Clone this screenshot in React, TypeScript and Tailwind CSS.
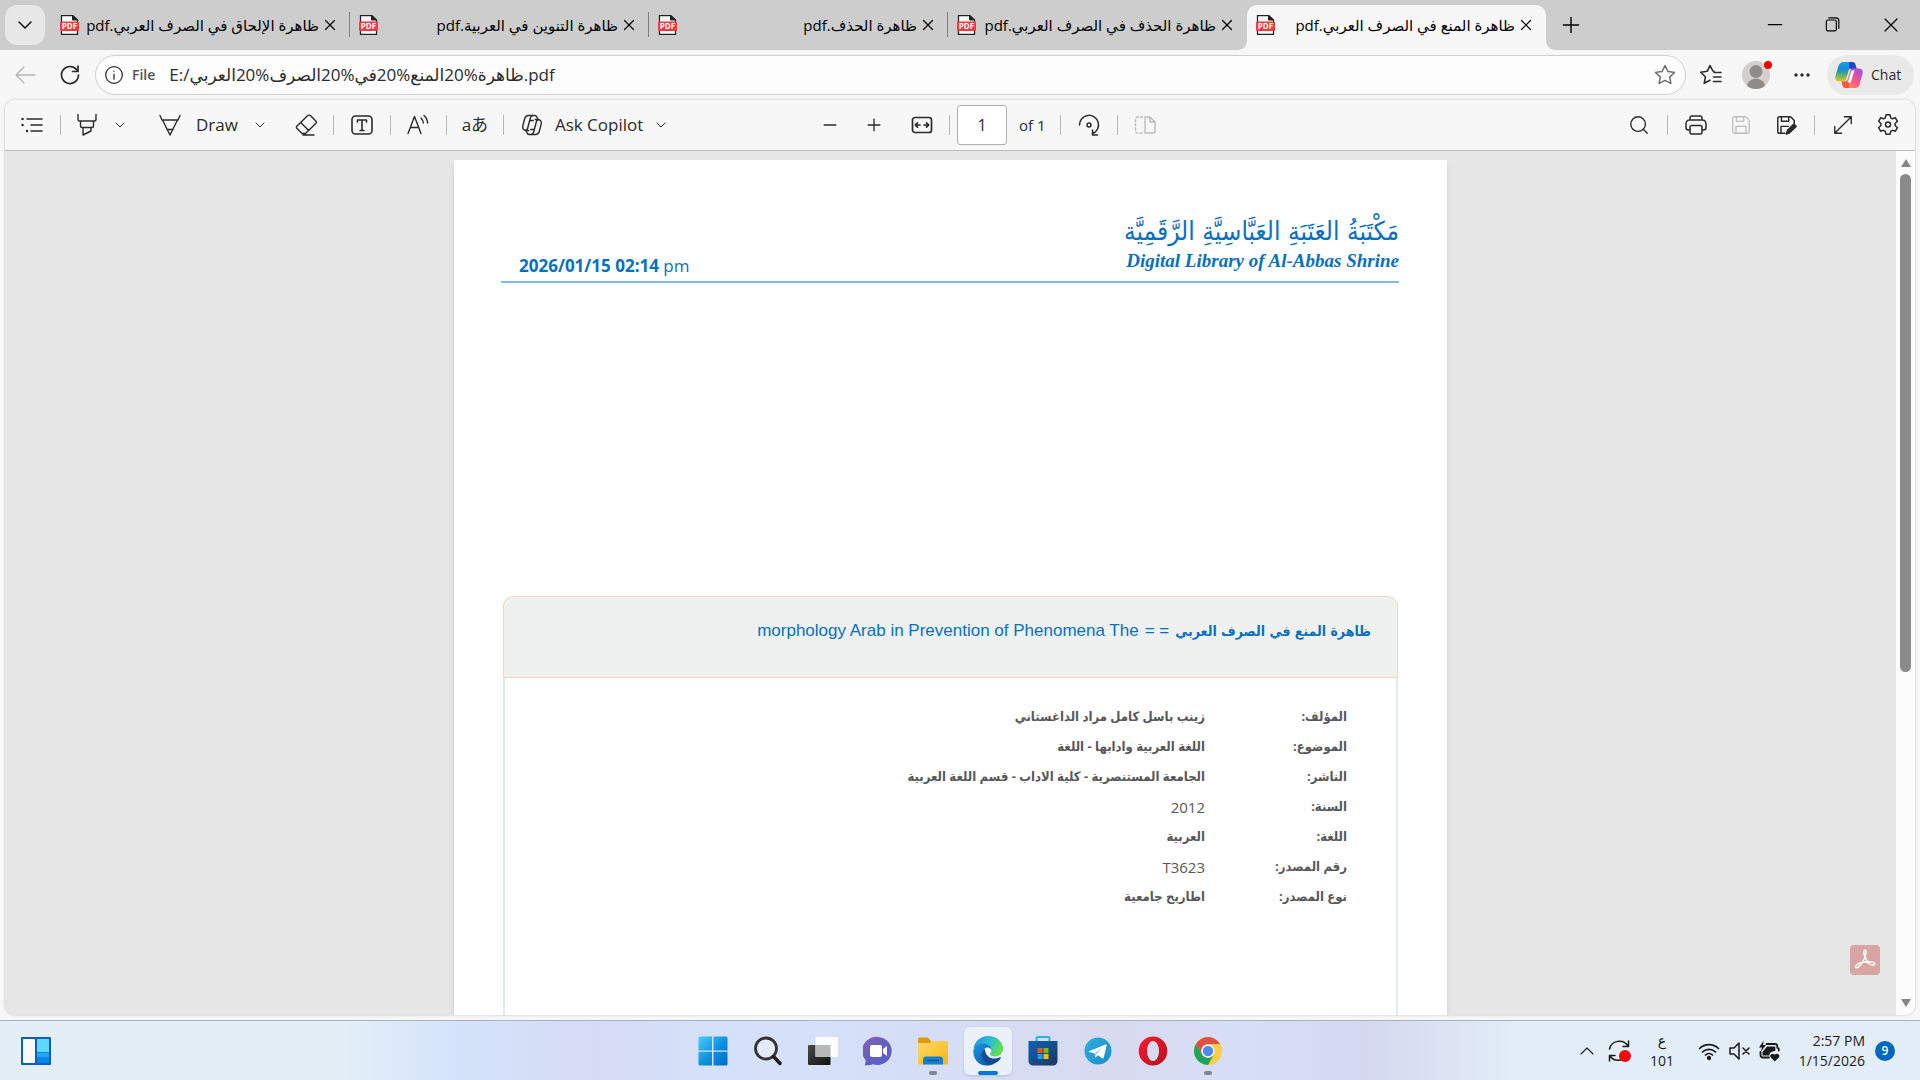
import React from "react";
import { ChevronDown, ChevronUp, Minus, Plus, Search, X } from "lucide-react";

const tabs = [
  { title: "ظاهرة الإلحاق في الصرف العربي.pdf", active: false, divider: true },
  { title: "ظاهرة التنوين في العربية.pdf", active: false, divider: true },
  { title: "ظاهرة الحذف.pdf", active: false, divider: true },
  { title: "ظاهرة الحذف في الصرف العربي.pdf", active: false, divider: false },
  { title: "ظاهرة المنع في الصرف العربي.pdf", active: true, divider: false },
];

const details = [
  { label: "المؤلف:", value: "زينب باسل كامل مراد الداغستاني" },
  { label: "الموضوع:", value: "اللغة العربية وادابها - اللغة" },
  { label: "الناشر:", value: "الجامعة المستنصرية - كلية الاداب - قسم اللغة العربية" },
  { label: "السنة:", value: "2012", latin: true },
  { label: "اللغة:", value: "العربية" },
  { label: "رقم المصدر:", value: "T3623", latin: true },
  { label: "نوع المصدر:", value: "اطاريح جامعية" },
];

interface IconProps {
  children: React.ReactNode;
  size?: string;
  width?: number;
}

const Icon = ({ children, size = "size-6", width = 1.4 }: IconProps) => (
  <svg
    viewBox="0 0 24 24"
    className={`${size} shrink-0`}
    fill="none"
    stroke="currentColor"
    strokeWidth={width}
    strokeLinecap="round"
    strokeLinejoin="round"
    aria-hidden="true"
  >
    {children}
  </svg>
);

interface ToolProps {
  label: string;
  className?: string;
  children: React.ReactNode;
}

const Tool = ({ label, className = "w-[54px]", children }: ToolProps) => (
  <button type="button" aria-label={label} className={`flex h-10 shrink-0 items-center justify-center ${className}`}>
    {children}
  </button>
);

const Divider = () => <span className="mx-px h-5 w-px shrink-0 bg-[#b8b8b8]" />;

const PdfIcon = () => (
  <svg viewBox="0 0 19 20" className="h-5 w-[19px] shrink-0" aria-hidden="true">
    <path d="M1.500.7h11.500L17.500 5v14.300h-16z" fill="#fff" stroke="#222" strokeWidth="1.3" />
    <path d="M12.500.7V5h5z" fill="#222" stroke="#222" />
    <rect y="6.500" width="19" height="9.500" rx="1" fill="#f8393f" />
    <text x="9.5" y="14" textAnchor="middle" fontSize="8" fontWeight="700" fill="#fff" fontFamily="Open Sans, sans-serif">
      PDF
    </text>
  </svg>
);

const CopilotOutline = () => (
  <Icon>
    <path d="M8.7 17.5H6.2c-2.7 0-4-2-3.4-4.6L4.6 6C5.200 3.700 6.200 2.500 8.500 2.500h6.300c1.400 0 2.100.9 2.500 2.200l.7 2" />
    <path d="M15.300 6.500h2.500c2.700 0 4 2 3.400 4.600L19.400 18c-.6 2.300-1.600 3.500-3.900 3.500H9.200c-1.400 0-2.100-.9-2.500-2.200l-.5-1.700" />
    <path d="M12.300 2.600c-1.200.5-1.700 1.400-2.100 2.900L7.700 15c-.4 1.600-.9 2.500-2.400 2.500" />
    <path d="M11.700 21.400c1.200-.5 1.700-1.400 2.100-2.900L16.300 9c.4-1.600.9-2.500 2.400-2.500" />
    <path d="M9.800 7.500h3.400M10.800 16.500h3.400" />
  </Icon>
);

const CopilotLogo = () => (
  <svg viewBox="0 0 28 28" className="size-7 shrink-0" aria-hidden="true">
    <defs>
      <linearGradient id="copilotA" x1="0" y1="0" x2="0" y2="1">
        <stop stopColor="#14a4e8" />
        <stop offset=".35" stopColor="#1787dd" />
        <stop offset=".65" stopColor="#4cb174" />
        <stop offset="1" stopColor="#f2c80e" />
      </linearGradient>
      <linearGradient id="copilotB" x1="1" y1="0" x2="0" y2="1">
        <stop stopColor="#9a4bee" />
        <stop offset=".5" stopColor="#f65888" />
        <stop offset="1" stopColor="#ffa34d" />
      </linearGradient>
    </defs>
    <path d="M9 1h8c2 0 3 1 3.500 3l.8 3H17c-2 0-3 1-3.500 3l-2 7c-.6 2-1.500 3.500-4 3.500H4.500C1 20.500-.3 18 .5 15L3.300 5.500C4.200 2.500 6 1 9 1z" fill="url(#copilotA)" />
    <path d="M14 1h3c2 0 3 1 3.500 3l1.500 4.500h-5c-1.500 0-2.500-1-3-3z" fill="#1947c8" />
    <path d="M19 27h-8c-2 0-3-1-3.500-3L6.600 20.500H9c2.500 0 3.400-1.500 4-3.500l2-7c.6-2 1.500-2.500 3-2.500h5.500c3.500 0 4.800 2.500 4 5.500l-2.800 9.500C24.800 25.500 22 27 19 27z" fill="url(#copilotB)" />
    <path d="M14 27h-3c-2 0-3-1-3.500-3l-1-3.500H11c1.800 0 2.500 1 3 2.500z" fill="#f0583f" />
    <path d="M16.500 9.500h3l-3.800 12h-3z" fill="#fff" />
  </svg>
);

const TabStrip = () => (
  <div className="flex h-[50px] items-end bg-[#cdcdcd] pl-[5px] text-black">
    <button type="button" aria-label="Tab actions" className="mb-[5px] mr-1.5 flex size-10 shrink-0 items-center justify-center rounded-xl bg-[#e7e7e7]">
      <ChevronDown className="size-6" strokeWidth={1.4} />
    </button>
    <div role="tablist" className="flex min-w-0">
      {tabs.map((tab) => (
        <div
          key={tab.title}
          role="tab"
          aria-selected={tab.active}
          className={`relative flex h-[45px] w-[299px] min-w-0 items-center pb-[5px] pl-[9px] pr-[11px] ${
            tab.active ? "rounded-t-[10px] bg-[#f7f7f7]" : ""
          }`}
        >
          {tab.active && (
            <>
              <svg viewBox="0 0 10 10" className="absolute -left-2.5 bottom-0 size-2.5" aria-hidden="true">
                <path d="M10 0v10H0C6 10 10 6 10 0z" fill="#f7f7f7" />
              </svg>
              <svg viewBox="0 0 10 10" className="absolute -right-2.5 bottom-0 size-2.5" aria-hidden="true">
                <path d="M0 0v10h10C4 10 0 6 0 0z" fill="#f7f7f7" />
              </svg>
            </>
          )}
          <PdfIcon />
          <span dir="rtl" className="min-w-0 flex-1 truncate text-[15px] leading-7">
            {tab.title}
          </span>
          <button type="button" aria-label="Close tab" className="ml-0.5">
            <X className="size-[18px]" strokeWidth={1.6} />
          </button>
          {tab.divider && <span className="absolute right-0 top-[7px] h-[25px] w-px bg-[#808080]" />}
        </div>
      ))}
    </div>
    <button type="button" aria-label="New tab" className="mb-[5px] flex h-10 w-[50px] items-center justify-center">
      <Plus className="size-[26px]" strokeWidth={1.3} />
    </button>
    <div className="mb-[5px] ml-auto flex">
      <Tool label="Minimize" className="w-[58px]">
        <Icon size="size-5"><path d="M4 11.500h16" /></Icon>
      </Tool>
      <Tool label="Restore" className="w-[58px]">
        <Icon size="size-5">
          <rect x="4" y="6" width="12" height="13" rx="2" />
          <path d="M7 3.500h8.500A3.500 3.500 0 0 1 19 7v9" />
        </Icon>
      </Tool>
      <Tool label="Close" className="w-[58px]">
        <X className="size-6" strokeWidth={1.2} />
      </Tool>
    </div>
  </div>
);

const AddressBar = () => (
  <div className="flex h-[50px] items-center bg-[#f7f7f7] pr-1.5 text-[#2b2b2b]">
    <Tool label="Back" className="w-[50px] text-[#b5b5b5]">
      <Icon><path d="M22 12H3M11 4l-8 8 8 8" /></Icon>
    </Tool>
    <Tool label="Refresh" className="w-10">
      <Icon width={1.7}>
        <path d="M19.500 8A8.500 8.500 0 1 0 20.500 12" />
        <path d="M20 3v5.500h-5.500" />
      </Icon>
    </Tool>
    <div className="ml-[5px] flex h-10 min-w-0 flex-1 items-center rounded-full border border-[#cfcfcf] bg-[#fdfdfd] px-2">
      <Icon size="size-5" width={1.5}>
        <circle cx="12" cy="12" r="10" />
        <path d="M12 11v6M12 7.300v.2" />
      </Icon>
      <label htmlFor="address" className="ml-2 text-sm font-semibold text-[#555]">File</label>
      <input
        id="address"
        dir="ltr"
        defaultValue="E:/ظاهرة%20المنع%20في%20الصرف%20العربي.pdf"
        className="ml-3.5 min-w-0 flex-1 bg-transparent text-[17px] outline-none"
      />
      <button type="button" aria-label="Add to favorites" className="text-[#666]">
        <Icon>
          <path d="m12 2.500 2.900 6 6.600.9-4.800 4.600 1.200 6.500-5.900-3.100-5.900 3.100L7.300 14 2.500 9.400l6.600-.9z" />
        </Icon>
      </button>
    </div>
    <Tool label="Favorites" className="w-[50px]">
      <Icon width={1.6}>
        <path d="M15 8.300 13.900 8 11 2.500 8.200 8.300l-6.500.9 4.700 4.600-1.200 6.500L11 17.200M15 9.500h7M14.500 14H22M14.500 18.500H22" />
      </Icon>
    </Tool>
    <Tool label="Profile" className="w-10">
      <svg viewBox="0 0 32 32" className="size-8" aria-hidden="true">
        <defs>
          <clipPath id="avatarClip"><circle cx="16" cy="16" r="14" /></clipPath>
        </defs>
        <circle cx="16" cy="16" r="14" fill="#d2d0ce" />
        <g clipPath="url(#avatarClip)" fill="#8f8b88">
          <circle cx="16" cy="12.500" r="6.500" />
          <circle cx="16" cy="29" r="9.500" />
        </g>
        <circle cx="28" cy="6" r="4" fill="#e8060b" />
      </svg>
    </Tool>
    <Tool label="Settings and more" className="w-[51px]">
      <svg viewBox="0 0 16 4" className="h-1 w-4" fill="currentColor" aria-hidden="true">
        <circle cx="2" cy="2" r="1.700" />
        <circle cx="8" cy="2" r="1.700" />
        <circle cx="14" cy="2" r="1.700" />
      </svg>
    </Tool>
    <button type="button" className="flex h-10 w-[87px] shrink-0 items-center gap-2 rounded-full bg-[#e9e9e9] pl-2 text-sm">
      <CopilotLogo />
      Chat
    </button>
  </div>
);

const Toolbar = () => (
  <div className="flex h-[51px] items-center border-b border-[#bdbdbd] bg-[#f7f7f7] text-[#2b2b2b]">
    <div className="flex flex-1 items-center">
      <Tool label="Contents">
        <Icon width={1.5}>
          <path d="M7 6h15M11 12h11M11 18h11" />
          <path d="M2.500 6h.1M2.500 12h.1M7 18h.1" strokeWidth="2.400" />
        </Icon>
      </Tool>
      <Divider />
      <Tool label="Highlight" className="w-[50px]">
        <Icon>
          <path d="M3 1.500v4.700c0 1 .6 1.800 1.500 1.800h15c.9 0 1.500-.8 1.500-1.800V1.500M5.500 8v5c0 1 .8 1.500 1.500 1.500h10c.8 0 1.500-.6 1.500-1.500V8M8 14.500V22l8-4v-3.500" />
        </Icon>
      </Tool>
      <Tool label="Highlight options" className="w-4"><ChevronDown className="size-4" strokeWidth={1.5} /></Tool>
      <button type="button" className="ml-[22px] flex h-10 items-center text-[17px]">
        <span className="flex w-10 justify-center">
          <Icon>
            <path d="M2 2.500l2 4.500h16l2-4.500M4.500 7l7.500 15L19.500 7M9 16.500h6" />
          </Icon>
        </span>
        <span className="ml-1.5">Draw</span>
      </button>
      <Tool label="Draw options" className="ml-2.5 w-6"><ChevronDown className="size-4" strokeWidth={1.5} /></Tool>
      <Tool label="Erase" className="ml-2 w-[52px]">
        <Icon>
          <path d="M13.500 2.800 2.800 13.200a1.500 1.500 0 0 0 0 2L8 20.500h3.500L22 10.200a1.500 1.500 0 0 0 0-2l-5.300-5.400a2.200 2.200 0 0 0-3.200 0zM6.700 9.500l8 8M9 22h11" />
        </Icon>
      </Tool>
      <Divider />
      <Tool label="Add text">
        <Icon width={1.6}>
          <rect x="2" y="3" width="20" height="18" rx="3.500" />
          <path d="M7.500 9V7h9v2M12 7v10.500M10 17.500h4" />
        </Icon>
      </Tool>
      <Divider />
      <Tool label="Read aloud" className="w-[53px]">
        <Icon>
          <path d="m2 20.500 6.500-17 6.500 17M4.300 14.500h8.400M15 5c1.500 1.500 2.200 3 2.300 5M18 2.500c2.300 2 3.500 4.500 3.600 7.500" />
        </Icon>
      </Tool>
      <Divider />
      <Tool label="Translate" className="w-[54px] text-[17px]">aあ</Tool>
      <Divider />
      <button type="button" className="ml-2 flex h-10 items-center text-[17px]">
        <span className="flex w-[38px] justify-center"><CopilotOutline /></span>
        <span className="ml-1">Ask Copilot</span>
        <ChevronDown className="ml-2.5 size-4" strokeWidth={1.5} />
      </button>
    </div>
    <div className="flex items-center pl-[68px]">
      <Tool label="Zoom out" className="w-11"><Minus className="size-5" strokeWidth={1.6} /></Tool>
      <Tool label="Zoom in" className="w-11"><Plus className="size-5" strokeWidth={1.6} /></Tool>
      <Tool label="Fit to width" className="w-[52px]">
        <Icon width={1.7}>
          <rect x="2.500" y="4.500" width="19" height="15" rx="2.500" />
          <path d="M10 12H5.500M7.500 9.800 5.300 12l2.200 2.200M14 12h4.500M16.500 9.800l2.200 2.200-2.200 2.200" />
        </Icon>
      </Tool>
      <Divider />
      <input
        aria-label="Page"
        defaultValue="1"
        className="ml-1.5 h-10 w-[50px] rounded-[3px] border border-[#b0b0b0] bg-white text-center text-base outline-none"
      />
      <span className="mx-3 w-7 whitespace-nowrap text-[15px]">of 1</span>
      <Divider />
      <Tool label="Rotate">
        <Icon width={1.5}>
          <path d="M2.500 12A9.500 9.500 0 1 1 16 20.500M15.500 17v5h5" />
          <circle cx="12" cy="12" r="2" />
        </Icon>
      </Tool>
      <Divider />
      <Tool label="Page view" className="w-[52px] text-[#bcbcbc]">
        <Icon>
          <path d="M9.500 4H4.500a2 2 0 0 0-2 2v12a2 2 0 0 0 2 2h5" strokeDasharray="2 2.200" />
          <path d="M12 4h5l5 5v9a2 2 0 0 1-2 2h-8zM17 4v5h5" />
        </Icon>
      </Tool>
    </div>
    <div className="flex flex-1 items-center justify-end pr-[9px]">
      <Tool label="Find"><Search className="size-[22px]" strokeWidth={1.5} /></Tool>
      <Divider />
      <Tool label="Print">
        <Icon width={1.5}>
          <path d="M6 7V5a2 2 0 0 1 2-2h8a2 2 0 0 1 2 2v2M6 17H4.500A2.500 2.500 0 0 1 2 14.500v-4A3.500 3.500 0 0 1 5.500 7h13a3.500 3.500 0 0 1 3.500 3.500v4a2.500 2.500 0 0 1-2.500 2.500H18" />
          <rect x="6" y="12.500" width="12" height="8.500" rx="1.500" />
        </Icon>
      </Tool>
      <Tool label="Save" className="w-9 text-[#bcbcbc]">
        <Icon size="size-[22px]">
          <path d="M3 5a2 2 0 0 1 2-2h12l4 4v12a2 2 0 0 1-2 2H5a2 2 0 0 1-2-2zM7 3v5h8V3M6.500 21v-7.500h11V21" />
        </Icon>
      </Tool>
      <Tool label="Save as">
        <Icon size="size-[22px]" width={1.6}>
          <path d="M11 21H5a2 2 0 0 1-2-2V5a2 2 0 0 1 2-2h12l4 4v3M7 3v5h8V3M6.500 21v-7.500h8" />
          <path d="m12.500 22 1-4 7-7 2.500 2.500-7 7z" fill="currentColor" />
        </Icon>
      </Tool>
      <Divider />
      <Tool label="Full screen">
        <Icon size="size-[22px]" width={1.5}><path d="M3.500 20.500 20.500 3.500M13.500 3h7.500v7.500M3 13.500V21h7.500" /></Icon>
      </Tool>
      <Tool label="Settings" className="w-9">
        <Icon width={1.5}>
          <path d="M10 1.800h4l.7 3 1.700 1 3-1 2 3.500-2.300 2.200v2l2.300 2.200-2 3.500-3-.9-1.700 1-.7 3h-4l-.7-3-1.700-1-3 .9-2-3.500L4.900 12.500v-2L2.600 8.300l2-3.500 3 1 1.700-1z" />
          <circle cx="12" cy="11.500" r="2.500" />
        </Icon>
      </Tool>
    </div>
  </div>
);

const Document = () => (
  <article className="h-full w-[993px] shrink-0 bg-[#fefefe] shadow-md">
    <header className="ml-[47px] mr-12 flex h-[123px] items-end justify-between border-b-2 border-[#84bbe1] pl-[18px] text-[#0a70bd]">
      <time className="text-[17px] leading-[30px]">
        <b>2026/01/15 02:14</b> pm
      </time>
      <div className="flex flex-col items-end pb-3">
        <span dir="rtl" className="whitespace-nowrap font-['DejaVu_Sans_Condensed','DejaVu_Sans'] text-[26px] leading-[44px]">
          مَكْتَبَةُ العَتَبَةِ العَبَّاسِيَّةِ الرَّقَمِيَّة
        </span>
        <span className="whitespace-nowrap font-['Liberation_Serif',serif] text-[19px] font-bold italic leading-4">
          Digital Library of Al-Abbas Shrine
        </span>
      </div>
    </header>
    <div dir="rtl" className="mx-[49px] mt-[313px] h-full">
      <h1 className="flex h-[82px] items-start gap-1.5 rounded-t-[10px] border border-[#f0d6bd] bg-[#eff1f1] px-[26px] pt-5 text-[17px] leading-7 text-[#0a70bd]">
        <span className="whitespace-nowrap font-['DejaVu_Sans_Condensed','DejaVu_Sans'] text-sm font-bold leading-7">
          ظاهرة المنع في الصرف العربي
        </span>
        <span className="font-['Liberation_Sans']">= =</span>
        <span dir="ltr" className="whitespace-nowrap font-['Liberation_Sans']">
          morphology Arab in Prevention of Phenomena The
        </span>
      </h1>
      <dl className="h-full border-x-2 border-[#dfebf3] px-[49px] pt-6 font-['Open_Sans','DejaVu_Sans_Condensed','DejaVu_Sans'] text-[13px] text-[#58585a]">
        {details.map((row) => (
          <div key={row.label} className="flex h-[30px] items-center">
            <dt className="w-[142px] shrink-0 font-bold">{row.label}</dt>
            <dd className={`whitespace-nowrap ${row.latin ? "text-[15px] font-medium" : "font-bold"}`}>{row.value}</dd>
          </div>
        ))}
      </dl>
    </div>
  </article>
);

const Viewer = () => (
  <main className="relative flex min-h-0 flex-1 bg-[#e6e6e6]">
    <div className="flex min-w-0 flex-1 justify-center overflow-hidden pt-[9px]">
      <Document />
    </div>
    <div className="flex w-[19px] shrink-0 flex-col items-center bg-[#fcfcfc] py-2 text-[#858585]">
      <svg viewBox="0 0 10 8" className="h-2 w-2.5" fill="currentColor" aria-hidden="true"><path d="M5 0l5 8H0z" /></svg>
      <div className="mt-[7px] h-[498px] w-[11px] rounded-full bg-[#8a8a8a]" />
      <svg viewBox="0 0 10 8" className="mt-auto h-2 w-2.5" fill="currentColor" aria-hidden="true"><path d="M0 0h10L5 8z" /></svg>
    </div>
    <button type="button" aria-label="Open in Acrobat" className="absolute bottom-10 right-[35px] flex size-[30px] items-center justify-center rounded-[4px] bg-[#d9a5a3] text-white">
      <Icon width={1.4}>
        <path d="M12 8.500c-1.500-3-1.500-6.500 0-6.500s1.500 3.500 0 6.500c-1.500 4.500-4.500 9.500-7.500 11-2 .8-3-.8-1.300-2.300C5.500 15.200 10 14 14 13.800c4-.2 8 .5 8 2s-3 1.700-5.500.2C14.500 14.600 13 11.500 12 8.500z" />
      </Icon>
    </button>
  </main>
);

interface AppButtonProps {
  label: string;
  active?: boolean;
  running?: boolean;
  children: React.ReactNode;
}

const AppButton = ({ label, active, running, children }: AppButtonProps) => (
  <button
    type="button"
    aria-label={label}
    className={`relative flex size-12 items-center justify-center rounded-md ${active ? "bg-[#ecf0fa] shadow-sm" : ""}`}
  >
    <svg viewBox="0 0 30 30" className="size-[30px]" aria-hidden="true">{children}</svg>
    {active && <span className="absolute bottom-0 h-1 w-5 rounded-full bg-[#0078d4]" />}
    {running && <span className="absolute bottom-0 h-1 w-2 rounded-full bg-[#808693]" />}
  </button>
);

const Gradient = ({ id, from, to, mid }: { id: string; from: string; to: string; mid?: string }) => (
  <linearGradient id={id} x1="0" y1="0" x2="1" y2="1">
    <stop stopColor={from} />
    {mid && <stop offset=".5" stopColor={mid} />}
    <stop offset="1" stopColor={to} />
  </linearGradient>
);

const TaskbarApps = () => (
  <nav aria-label="Apps" className="flex gap-[7px]">
    <AppButton label="Start">
      <Gradient id="win" from="#46d0fb" to="#0069cc" mid="#1194e0" />
      <path d="M2 .500h12v14H.500V2A1.500 1.500 0 0 1 2 .500zM15.500.500H28A1.500 1.500 0 0 1 29.500 2v12.500h-14zM.500 15.700h13.500v13.800H2A1.500 1.500 0 0 1 .500 28zM15.500 15.700h14V28a1.500 1.500 0 0 1-1.500 1.500H15.500z" fill="url(#win)" />
    </AppButton>
    <AppButton label="Search">
      <circle cx="13" cy="12.500" r="10.500" fill="#e8eefb" fillOpacity=".7" stroke="#333" strokeWidth="2.800" />
      <path d="m20.500 20.500 6.500 7" stroke="#1d1d1d" strokeWidth="3.400" strokeLinecap="round" />
    </AppButton>
    <AppButton label="Task view">
      <Gradient id="view" from="#494949" to="#111" />
      <rect x="0" y="9" width="22.500" height="20" rx="1" fill="url(#view)" />
      <rect x="7.500" y="1" width="22.500" height="20" rx="1" fill="#fff" fillOpacity=".95" />
      <path d="M7.500 9h15v12h-14a1 1 0 0 1-1-1z" fill="#b9b9b9" />
    </AppButton>
    <AppButton label="Chat">
      <Gradient id="teams" from="#8b61b8" to="#5a5fd0" mid="#6360bd" />
      <path d="M15 1a14 14 0 1 1-5 27.200c-2.500.9-5.500 1.500-8.500.8 1-1.700 1.400-3 1-5A14 14 0 0 1 15 1z" fill="url(#teams)" />
      <rect x="7" y="9" width="12" height="12" rx="2" fill="#fff" />
      <path d="m20 13 4-3v10l-4-3z" fill="#fff" />
    </AppButton>
    <AppButton label="File Explorer" running>
      <Gradient id="folder" from="#ffdb6b" to="#f7b50e" />
      <path d="M0 3.500C0 2 .8 1.500 2 1.500h8l3 3.500v6H0z" fill="#dd9b08" />
      <path d="M0 7h12l2-2h15c.6 0 1 .4 1 1v21c0 .8-.5 1.500-1.500 1.500h-27C.5 28.500 0 28 0 27z" fill="url(#folder)" />
      <path d="M5 28.500v-5a3 3 0 0 1 3-3h14a3 3 0 0 1 3 3v5z" fill="#1580cf" />
      <path d="M9 24.500h12" stroke="#0a4c88" strokeWidth="1.200" />
    </AppButton>
    <AppButton label="Microsoft Edge" active>
      <linearGradient id="edgeTop" x1="0" y1=".2" x2="1" y2=".6">
        <stop stopColor="#2293dc" />
        <stop offset=".55" stopColor="#2bc3d2" />
        <stop offset="1" stopColor="#6be23c" />
      </linearGradient>
      <Gradient id="edgeLeft" from="#1a9be0" to="#0a4da3" />
      <path d="M.500 13A15 14.500 0 0 1 15 0c9 0 15 6 15 12.500 0 5-3.500 8-8 8-3 0-5-1.300-5-2.500 0-.8 1.400-1.300 1.400-3.500 0-3-3-5-6.400-5C7 9.500 2.500 11 .500 13z" fill="url(#edgeTop)" />
      <path d="M.300 15C1.500 10 6 7.500 10.500 7.500c4.500 0 8 3 8 6.500 0 0-1-2.500-4-2.500-4 0-5.500 5-3.500 9.500 1.600 3.800 5 6.500 9.500 7C9 33 0 25 .300 15z" fill="url(#edgeLeft)" />
      <path d="M11.800 13c-3.500 2.500-4 7.500-1.800 11 2.500 4 6.800 5 10.500 4 3.500-1.300 6-3.500 7.300-6 .3-.7-.3-1-1-.7-4 2-9 1.700-12-1.300-2-2-2.800-4.500-3-7z" fill="#114c95" />
    </AppButton>
    <AppButton label="Microsoft Store">
      <Gradient id="store" from="#0a63b8" to="#20365d" />
      <path d="M8.500 6V2.500C8.500 1.500 9 1 10 1h10c1 0 1.500.5 1.500 1.500V6" fill="none" stroke="#1fb5ee" strokeWidth="2" />
      <path d="M.500 5h29v20a4.500 4.500 0 0 1-4.500 4.500H5A4.500 4.500 0 0 1 .500 25z" fill="url(#store)" />
      <path d="M9.500 12h5v5h-5z" fill="#f25022" />
      <path d="M15.500 12h5v5h-5z" fill="#7fba00" />
      <path d="M9.500 18h5v5h-5z" fill="#00a4ef" />
      <path d="M15.500 18h5v5h-5z" fill="#ffb900" />
    </AppButton>
    <AppButton label="Telegram">
      <Gradient id="telegram" from="#2eaee0" to="#1a8dc7" />
      <circle cx="15" cy="15" r="13.500" fill="url(#telegram)" />
      <path d="M6 15.200 22.500 8.500c.8-.2 1.200.3 1 1.200l-2.800 12c-.2.900-.8 1-1.500.6l-4.200-3-2.200 2c-.4.300-.8.200-.8-.3l-.3-3.500-5.300-1.500c-.7-.2-.7-.6-.4-.8z" fill="#fff" />
      <path d="m11.700 17.500 8-6.500-6.500 7.500-.9 2.800z" fill="#9cc9e0" />
    </AppButton>
    <AppButton label="Opera">
      <Gradient id="opera" from="#ff1b2d" to="#b3101c" />
      <path fillRule="evenodd" d="M15 .500a14.300 14.500 0 1 0 0 29 14.300 14.500 0 1 0 0-29zm0 4.500c3.500 0 6 4.500 6 10s-2.500 10-6 10-6-4.500-6-10 2.500-10 6-10z" fill="url(#opera)" />
    </AppButton>
    <AppButton label="Google Chrome" running>
      <circle cx="15" cy="15" r="14" fill="#fecd45" />
      <path d="M2.900 8A14 14 0 0 1 27.100 8H15a7 7 0 0 0-6 10.500z" fill="#dd5044" />
      <path d="M2.900 8a14 14 0 0 0 12.100 21l6-10.500a7 7 0 0 1-12 0z" fill="#1da261" />
      <circle cx="15" cy="15" r="6.500" fill="#fff" />
      <circle cx="15" cy="15" r="5.200" fill="#4c8bf5" />
    </AppButton>
  </nav>
);

const Tray = () => (
  <div className="mr-[5px] flex items-center text-[#1b1b1b]">
    <Tool label="Hidden icons" className="w-6"><ChevronUp className="size-8" strokeWidth={1.1} /></Tool>
    <Tool label="Update" className="ml-2 w-6">
      <Icon width={1.5}>
        <path d="M2.500 10A10 9.500 0 0 1 21 7M21.500 2v5.500H16M21 14a10 9.500 0 0 1-18 3M2.500 22v-5.500H8" />
        <circle cx="18" cy="17" r="6" fill="#fb0207" stroke="none" />
      </Icon>
    </Tool>
    <button type="button" className="ml-4 flex w-[30px] flex-col items-center text-sm leading-5">
      <span>ع</span>
      <span>101</span>
    </button>
    <button type="button" aria-label="Network, volume and battery" className="ml-5 flex items-center gap-1.5">
      <Icon width={1.7}>
        <path d="M2.500 9.500a13.500 13.500 0 0 1 19 0M5.500 13a9.200 9.200 0 0 1 13 0M8.500 16a5 5 0 0 1 7 0" />
        <circle cx="12" cy="19" r="1.300" fill="currentColor" />
      </Icon>
      <Icon width={1.5}>
        <path d="M3 9h4l5-5v16l-5-5H3zM16 9l6 6M22 9l-6 6" />
      </Icon>
      <Icon width={1.8}>
        <path d="M9.500 5H18c1.400 0 2.300.9 2.300 2.300v1.500c.9 0 1.500.6 1.500 1.400v1.300M3.500 13v3c0 1.500 1 2.500 2.500 2.500h6" />
        <path d="M5.500 13 10 7.500h7.700c.4 0 .6.200.6.600V12c-3 0-6.300 1.500-5.800 4.500H5.500z" fill="currentColor" stroke="none" />
        <path d="M6.800 1.500 2 8.500h3l-1.500 4.500 5.500-7H6z" fill="currentColor" stroke="none" />
        <path d="m17.800 22.500-4-4c-2-2.700 1.800-5.200 4-2.800 2.200-2.400 6 .1 4 2.800z" fill="currentColor" stroke="none" />
      </Icon>
    </button>
    <time className="ml-4 w-[68px] whitespace-nowrap text-right text-sm leading-5">
      2:57 PM
      <br />
      1/15/2026
    </time>
    <span className="ml-2.5 flex size-5 items-center justify-center rounded-full bg-[#0067c0] text-xs font-semibold text-white">9</span>
  </div>
);

const Taskbar = () => (
  <footer className="grid h-[60px] grid-cols-[1fr_auto_1fr] items-center border-t border-[#a9b1c0] bg-[linear-gradient(90deg,#e3eef7_18%,#d4e3fb_24%,#d6daf5_31%,#d5e1fa_37%,#d5dff8_46%,#d8daef_58%,#d6dff7_65%,#d5d8f0_71%,#e2edf7_79%)] px-5">
    <button type="button" aria-label="Widgets" className="w-8">
      <svg viewBox="0 0 32 30" className="h-[30px] w-8" aria-hidden="true">
        <rect x="1" y="1" width="30" height="28" rx="1" fill="#0b61b5" />
        <rect x="3" y="3" width="12" height="24" rx="1" fill="#f8f8f8" />
        <path d="M17 3h12v13H17z" fill="#63d8ff" />
        <path d="M17 16.500h12v5H17z" fill="#1ea7fa" />
        <path d="M17 22h12v5H17z" fill="#0883ea" />
      </svg>
    </button>
    <TaskbarApps />
    <div className="justify-self-end"><Tray /></div>
  </footer>
);

const App = () => (
  <div className="flex h-screen flex-col overflow-hidden bg-[#f7f7f7] font-['Open_Sans','DejaVu_Sans','Noto_Sans_CJK_JP',sans-serif]">
    <TabStrip />
    <AddressBar />
    <div className="mx-[5px] mb-[5px] flex min-h-0 flex-1 flex-col overflow-hidden rounded-[10px] shadow-[0_0_3px_#c0c0c0]">
      <Toolbar />
      <Viewer />
    </div>
    <Taskbar />
  </div>
);

export default App;
